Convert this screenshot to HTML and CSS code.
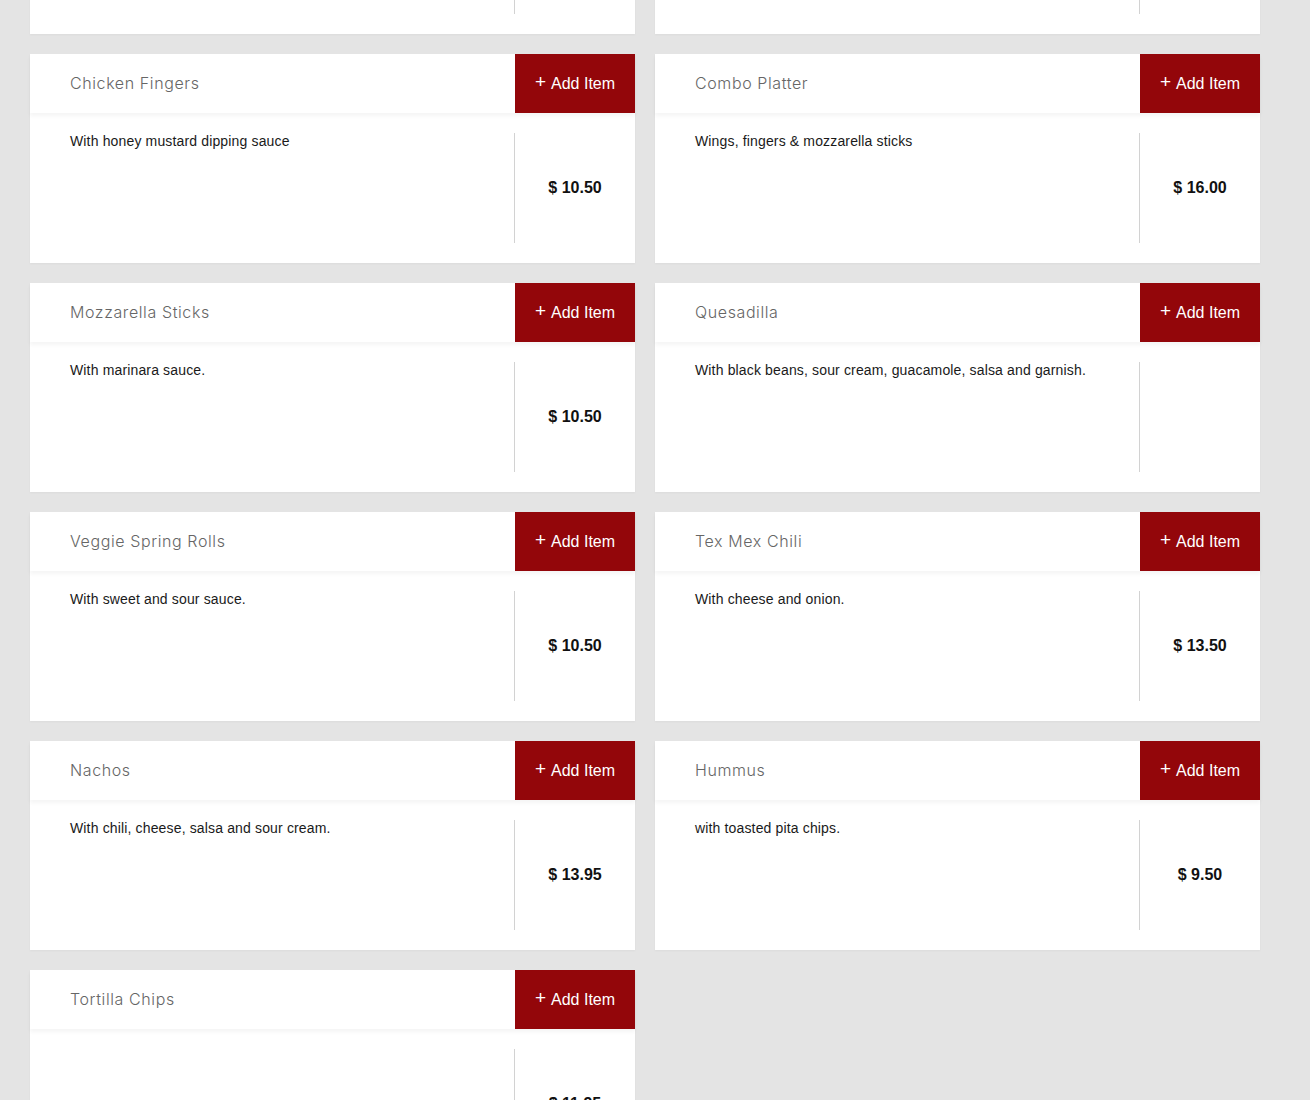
FILE: index.html
```html
<!DOCTYPE html>
<html lang="en">
<head>
<meta charset="utf-8">
<title>Menu</title>
<link rel="stylesheet" href="styles.css">
</head>
<body>
<main class="menu">
  <article class="card">
    <header class="card-head"><h3 class="title">Buffalo Wings</h3><button class="add-btn"><span class="plus">+</span> Add Item</button></header>
    <div class="card-body"><p class="desc">With celery and blue cheese.</p><div class="price">$ 12.50</div></div>
  </article>
  <article class="card">
    <header class="card-head"><h3 class="title">Potato Skins</h3><button class="add-btn"><span class="plus">+</span> Add Item</button></header>
    <div class="card-body"><p class="desc">With bacon, cheese and sour cream.</p><div class="price">$ 10.50</div></div>
  </article>

  <article class="card">
    <header class="card-head"><h3 class="title">Chicken Fingers</h3><button class="add-btn"><span class="plus">+</span> Add Item</button></header>
    <div class="card-body"><p class="desc">With honey mustard dipping sauce</p><div class="price">$ 10.50</div></div>
  </article>
  <article class="card">
    <header class="card-head"><h3 class="title">Combo Platter</h3><button class="add-btn"><span class="plus">+</span> Add Item</button></header>
    <div class="card-body"><p class="desc">Wings, fingers &amp; mozzarella sticks</p><div class="price">$ 16.00</div></div>
  </article>

  <article class="card">
    <header class="card-head"><h3 class="title">Mozzarella Sticks</h3><button class="add-btn"><span class="plus">+</span> Add Item</button></header>
    <div class="card-body"><p class="desc">With marinara sauce.</p><div class="price">$ 10.50</div></div>
  </article>
  <article class="card">
    <header class="card-head"><h3 class="title">Quesadilla</h3><button class="add-btn"><span class="plus">+</span> Add Item</button></header>
    <div class="card-body"><p class="desc">With black beans, sour cream, guacamole, salsa and garnish.</p><div class="price"></div></div>
  </article>

  <article class="card">
    <header class="card-head"><h3 class="title">Veggie Spring Rolls</h3><button class="add-btn"><span class="plus">+</span> Add Item</button></header>
    <div class="card-body"><p class="desc">With sweet and sour sauce.</p><div class="price">$ 10.50</div></div>
  </article>
  <article class="card">
    <header class="card-head"><h3 class="title">Tex Mex Chili</h3><button class="add-btn"><span class="plus">+</span> Add Item</button></header>
    <div class="card-body"><p class="desc">With cheese and onion.</p><div class="price">$ 13.50</div></div>
  </article>

  <article class="card">
    <header class="card-head"><h3 class="title">Nachos</h3><button class="add-btn"><span class="plus">+</span> Add Item</button></header>
    <div class="card-body"><p class="desc">With chili, cheese, salsa and sour cream.</p><div class="price">$ 13.95</div></div>
  </article>
  <article class="card">
    <header class="card-head"><h3 class="title">Hummus</h3><button class="add-btn"><span class="plus">+</span> Add Item</button></header>
    <div class="card-body"><p class="desc">with toasted pita chips.</p><div class="price">$ 9.50</div></div>
  </article>

  <article class="card">
    <header class="card-head"><h3 class="title">Tortilla Chips</h3><button class="add-btn"><span class="plus">+</span> Add Item</button></header>
    <div class="card-body"><p class="desc"></p><div class="price">$ 11.95</div></div>
  </article>
</main>
</body>
</html>
```
FILE: styles.css
```css
html, body {
  margin: 0;
  padding: 0;
  overflow: hidden;
  height: 1100px;
}
body {
  background: #e4e4e4;
  font-family: "Liberation Sans", Arial, sans-serif;
}
.menu {
  display: grid;
  grid-template-columns: 605px 605px;
  column-gap: 20px;
  row-gap: 20px;
  padding-left: 30px;
  margin-top: -175px;
}
.card {
  background: #fff;
  height: 209px;
  display: flex;
  flex-direction: column;
  box-shadow: 0 1px 2px rgba(0, 0, 0, 0.04);
}
.card-head {
  display: flex;
  height: 59px;
  position: relative;
  z-index: 1;
  box-shadow: 0 3px 4px rgba(0, 0, 0, 0.045);
}
.title {
  flex: 1;
  margin: 0;
  padding-left: 40px;
  padding-bottom: 1px;
  display: flex;
  align-items: center;
  font-family: Inter, "Open Sans", sans-serif;
  font-weight: 300;
  font-size: 16px;
  color: #666;
  letter-spacing: 0.6px;
}
.add-btn {
  width: 120px;
  border: 0;
  margin: 0;
  padding: 0;
  background: #93060a;
  color: #fff;
  font-family: "Liberation Sans", Arial, sans-serif;
  font-size: 16px;
  display: flex;
  align-items: center;
  justify-content: center;
  gap: 5px;
  cursor: pointer;
}
.plus {
  font-size: 19px;
  line-height: 1;
  position: relative;
  top: -2px;
}
.card-body {
  flex: 1;
  display: flex;
  padding: 20px 0 20px 40px;
}
.desc {
  flex: 1;
  margin: 0;
  font-size: 14px;
  line-height: 16px;
  letter-spacing: 0.15px;
  color: #1a1a1a;
}
.price {
  width: 121px;
  box-sizing: border-box;
  border-left: 1px solid #d2d2d2;
  display: flex;
  align-items: center;
  justify-content: center;
  font-weight: 700;
  font-size: 16px;
  color: #111;
}
```
